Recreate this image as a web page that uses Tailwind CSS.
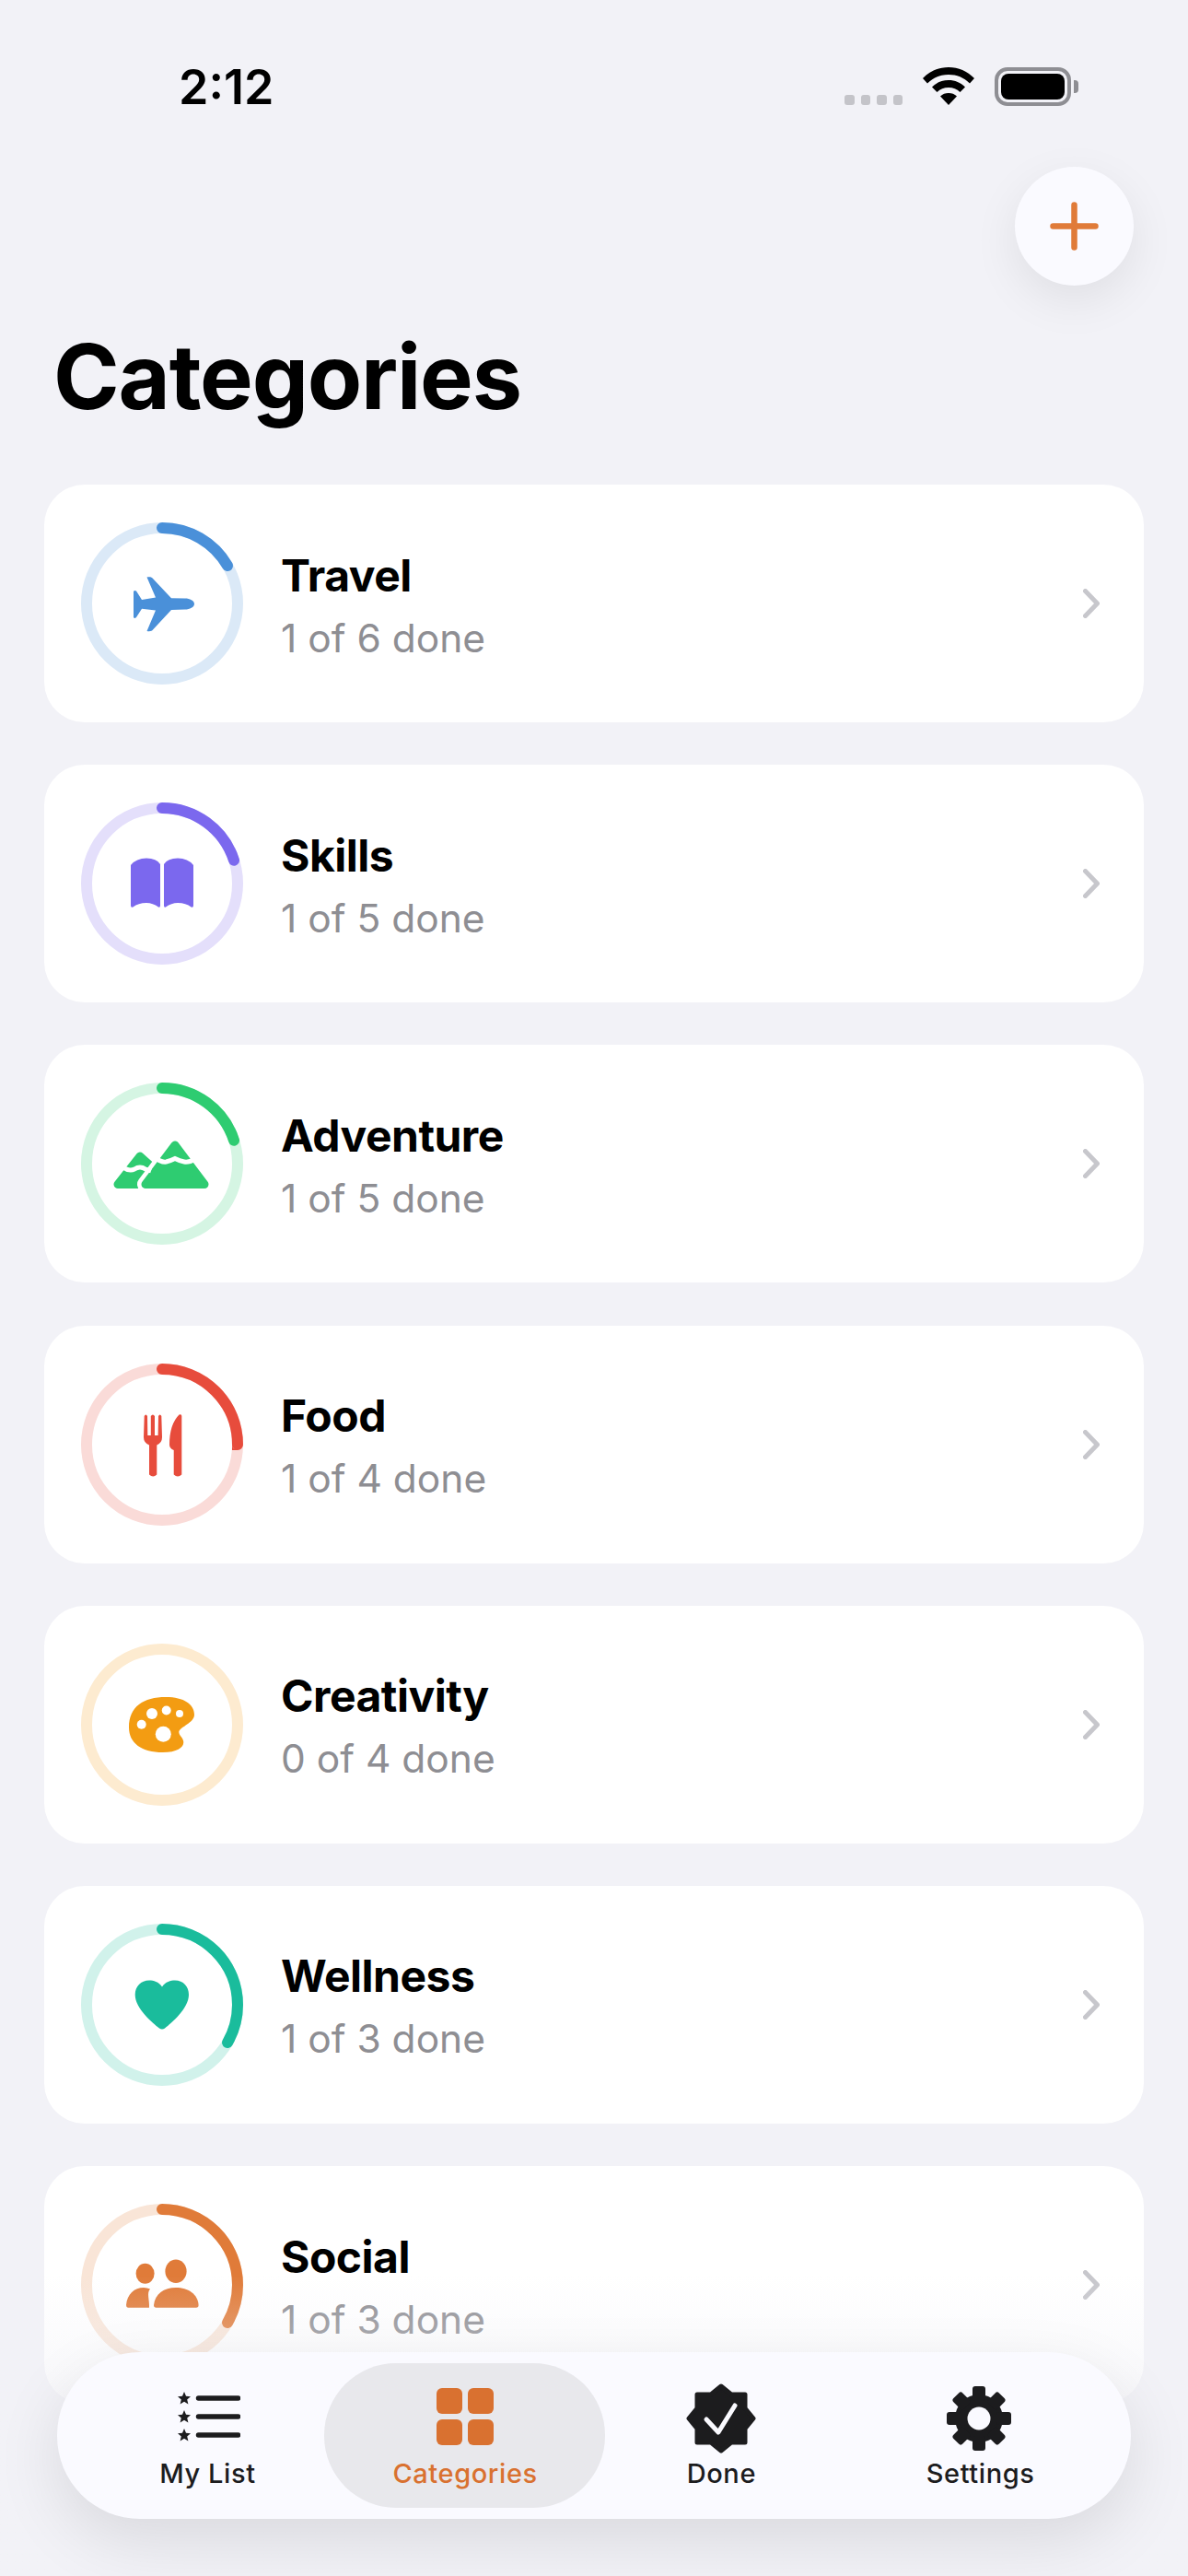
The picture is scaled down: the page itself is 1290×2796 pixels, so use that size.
<!DOCTYPE html>
<html lang="en">
<head>
    <meta charset="UTF-8">
    <meta name="viewport" content="width=device-width, initial-scale=1.0">
    <title>Categories</title>
    <script src="https://cdn.jsdelivr.net/npm/@tailwindcss/browser@4"></script>
</head>
<body class="bg-[#f2f2f7]">
<div class="relative w-[1290px] h-[2796px] overflow-hidden bg-[#f2f2f7] text-black [font-family:Inter,sans-serif]">

    <!-- status bar -->
    <div class="flex items-end justify-between h-[115px] pl-[194px] pr-[119px]">
        <span class="-mb-[5px] text-[52px] leading-[50px] font-semibold">2:12</span>
        <div class="flex items-end">
            <div class="flex gap-[7px] mb-[1px]">
                <span class="w-[10.5px] h-[11px] rounded-[3px] bg-[#c4c4c9]"></span>
                <span class="w-[10.5px] h-[11px] rounded-[3px] bg-[#c4c4c9]"></span>
                <span class="w-[10.5px] h-[11px] rounded-[3px] bg-[#c4c4c9]"></span>
                <span class="w-[10.5px] h-[11px] rounded-[3px] bg-[#c4c4c9]"></span>
            </div>
            <svg class="ml-[22px] mb-[1px]" width="56" height="41" viewBox="0 0 56 41">
                <path fill="#000" d="M28 0C17 0 8 4 0 12l5 5.5C11.5 11 19 8 28 8s16.5 3 23 9.5l5-5.5C48 4 39 0 28 0Z"/>
                <path fill="#000" d="M28 14c-7 0-13 2.5-18 7.5l5.5 5.5c3.5-3.5 7.5-5 12.5-5s9 1.5 12.5 5l5.5-5.5C41 16.5 35 14 28 14Z"/>
                <path fill="#000" d="M28 28c-3.5 0-6.5 1-9 3.5L28 41l9-9.5C34.5 29 31.5 28 28 28Z"/>
            </svg>
            <div class="ml-[22px] flex items-center">
                <div class="w-[83px] h-[42px] rounded-[14px] border-[4px] border-[#8e8e93] p-[3px]">
                    <div class="w-full h-full rounded-[8px] bg-black"></div>
                </div>
                <span class="ml-[3px] w-[5px] h-[14px] rounded-r-[4px] bg-[#8e8e93]"></span>
            </div>
        </div>
    </div>

    <!-- add button -->
    <div class="flex justify-end pr-[59px] mt-[66px]">
        <button class="flex items-center justify-center w-[129px] h-[129px] rounded-full bg-[#fafaff] shadow-[0_16px_50px_rgba(0,0,0,0.08)]">
            <svg width="53" height="53" viewBox="0 0 53 53"><path d="M26.5 3.5v46M3.5 26.5h46" stroke="#e07b39" stroke-width="6.5" stroke-linecap="round"/></svg>
        </button>
    </div>

    <h1 class="pl-[58px] mt-[39px] text-[97px] leading-[120px] font-bold tracking-[-1.2px]">Categories</h1>

    <!-- category list -->
    <div class="flex flex-col gap-[46.2px] px-[48px] mt-[57px]">

        <div class="flex items-center h-[258px] pl-[40px] pr-[48px] bg-white rounded-[44px]">
            <svg class="shrink-0" width="176" height="176" viewBox="0 0 176 176">
                <circle cx="88" cy="88" r="82" fill="none" stroke="#dbe9f7" stroke-width="12"/>
                <circle cx="88" cy="88" r="82" fill="none" stroke="#4a90d9" stroke-width="12" stroke-linecap="round" pathLength="100" stroke-dasharray="16.67 100" transform="rotate(-90 88 88)"/>
                <path fill="#4a90d9" d="M123 88.5C123 85 118 82.5 113 82.5L98 82.3L78 61C77 59.5 75 59 71.5 59.5L81 81.5L66 84L60 74.5Q58 73.5 57 75L57 103Q58 105 60 103L66 93.7L81 95.5L71.5 118C75 118.5 77 118 78 116.5L98 95L113 94.5C118 94.5 123 92 123 88.5Z"/>
            </svg>
            <div class="ml-[41px] flex-1 pt-[7px]">
                <p class="text-[48px] leading-[60px] font-bold tracking-[-0.5px]">Travel</p>
                <p class="mt-[8px] text-[42.5px] leading-[60px] text-[#8e8e93]">1 of 6 done</p>
            </div>
            <svg width="18" height="32" viewBox="0 0 18 32"><path d="M2.5 2.5L15.5 16L2.5 29.5" fill="none" stroke="#c7c7cc" stroke-width="5" stroke-linecap="round" stroke-linejoin="round"/></svg>
        </div>

        <div class="flex items-center h-[258px] pl-[40px] pr-[48px] bg-white rounded-[44px]">
            <svg class="shrink-0" width="176" height="176" viewBox="0 0 176 176">
                <circle cx="88" cy="88" r="82" fill="none" stroke="#e4dffb" stroke-width="12"/>
                <circle cx="88" cy="88" r="82" fill="none" stroke="#7b68ee" stroke-width="12" stroke-linecap="round" pathLength="100" stroke-dasharray="20 100" transform="rotate(-90 88 88)"/>
                <path fill="#7b68ee" d="M54 68Q60 60.5 71 60.5Q82 60.5 86 67L86 112Q86 114.5 84 113.5Q78 109 71 109Q62 109 56.5 113.5Q54 114.5 54 112Z"/>
                <path fill="#7b68ee" d="M122 68Q116 60.5 105 60.5Q94 60.5 90 67L90 112Q90 114.5 92 113.5Q98 109 105 109Q114 109 119.5 113.5Q122 114.5 122 112Z"/>
            </svg>
            <div class="ml-[41px] flex-1 pt-[7px]">
                <p class="text-[48px] leading-[60px] font-bold tracking-[-0.5px]">Skills</p>
                <p class="mt-[8px] text-[42.5px] leading-[60px] text-[#8e8e93]">1 of 5 done</p>
            </div>
            <svg width="18" height="32" viewBox="0 0 18 32"><path d="M2.5 2.5L15.5 16L2.5 29.5" fill="none" stroke="#c7c7cc" stroke-width="5" stroke-linecap="round" stroke-linejoin="round"/></svg>
        </div>

        <div class="flex items-center h-[258px] pl-[40px] pr-[48px] bg-white rounded-[44px]">
            <svg class="shrink-0" width="176" height="176" viewBox="0 0 176 176">
                <circle cx="88" cy="88" r="82" fill="none" stroke="#d5f5e3" stroke-width="12"/>
                <circle cx="88" cy="88" r="82" fill="none" stroke="#2ecc71" stroke-width="12" stroke-linecap="round" pathLength="100" stroke-dasharray="20 100" transform="rotate(-90 88 88)"/>
                <path fill="#2ecc71" stroke="#2ecc71" stroke-width="9" stroke-linejoin="round" d="M64 80L40 110.5L92 110.5L84 98Z"/>
                <path fill="#2ecc71" stroke="#fff" stroke-width="18" stroke-linejoin="round" d="M102 68L70 110.5L134 110.5Z"/>
                <path fill="#2ecc71" stroke="#2ecc71" stroke-width="9" stroke-linejoin="round" d="M102 68L70 110.5L134 110.5Z"/>
                <path fill="none" stroke="#fff" stroke-width="5" d="M80 81Q87 87 92.5 86Q97 85 102 82.5Q107 85 112 86Q117 87 124 83"/>
                <path fill="none" stroke="#fff" stroke-width="5" d="M44 91Q52 97 58 94Q64 90 70 94L76 96"/>
            </svg>
            <div class="ml-[41px] flex-1 pt-[7px]">
                <p class="text-[48px] leading-[60px] font-bold tracking-[-0.5px]">Adventure</p>
                <p class="mt-[8px] text-[42.5px] leading-[60px] text-[#8e8e93]">1 of 5 done</p>
            </div>
            <svg width="18" height="32" viewBox="0 0 18 32"><path d="M2.5 2.5L15.5 16L2.5 29.5" fill="none" stroke="#c7c7cc" stroke-width="5" stroke-linecap="round" stroke-linejoin="round"/></svg>
        </div>

        <div class="flex items-center h-[258px] pl-[40px] pr-[48px] bg-white rounded-[44px]">
            <svg class="shrink-0" width="176" height="176" viewBox="0 0 176 176">
                <circle cx="88" cy="88" r="82" fill="none" stroke="#fadbd8" stroke-width="12"/>
                <circle cx="88" cy="88" r="82" fill="none" stroke="#e74c3c" stroke-width="12" stroke-linecap="round" pathLength="100" stroke-dasharray="25 100" transform="rotate(-90 88 88)"/>
                <path fill="#e74c3c" d="M68.7 57Q70.3 54 72 57L72.3 78H75.8V57Q78 54 80 57V78H83.6L84 57Q85.7 54 87.3 57L88 80Q88 86 82.3 88.5V120.5Q78.2 124.5 74 120.5V88.5Q68 86 68 80Z"/>
                <path fill="#e74c3c" d="M109.3 57V120.5Q105 124.5 100.7 120.5V94Q96 92 96 88Q96 66 106.5 55.5Q109.3 54.5 109.3 57Z"/>
            </svg>
            <div class="ml-[41px] flex-1 pt-[7px]">
                <p class="text-[48px] leading-[60px] font-bold tracking-[-0.5px]">Food</p>
                <p class="mt-[8px] text-[42.5px] leading-[60px] text-[#8e8e93]">1 of 4 done</p>
            </div>
            <svg width="18" height="32" viewBox="0 0 18 32"><path d="M2.5 2.5L15.5 16L2.5 29.5" fill="none" stroke="#c7c7cc" stroke-width="5" stroke-linecap="round" stroke-linejoin="round"/></svg>
        </div>

        <div class="flex items-center h-[258px] pl-[40px] pr-[48px] bg-white rounded-[44px]">
            <svg class="shrink-0" width="176" height="176" viewBox="0 0 176 176">
                <circle cx="88" cy="88" r="82" fill="none" stroke="#fdebd0" stroke-width="12"/>
                <path fill="#f39c12" d="M52 91C52 68 68 58 92 58C112 58 123 66 123 77C123 86 108 90 106.3 95.6C106 100 111.3 102 111.3 107C111.3 113 104 118 88.7 118C66 118 52 108 52 91Z"/>
                <circle cx="77" cy="76" r="6" fill="#fff"/>
                <circle cx="92.7" cy="72.5" r="5" fill="#fff"/>
                <circle cx="107" cy="76" r="4" fill="#fff"/>
                <circle cx="65.7" cy="87.7" r="5" fill="#fff"/>
                <circle cx="89.3" cy="98.3" r="8.5" fill="#fff"/>
            </svg>
            <div class="ml-[41px] flex-1 pt-[7px]">
                <p class="text-[48px] leading-[60px] font-bold tracking-[-0.5px]">Creativity</p>
                <p class="mt-[8px] text-[42.5px] leading-[60px] text-[#8e8e93]">0 of 4 done</p>
            </div>
            <svg width="18" height="32" viewBox="0 0 18 32"><path d="M2.5 2.5L15.5 16L2.5 29.5" fill="none" stroke="#c7c7cc" stroke-width="5" stroke-linecap="round" stroke-linejoin="round"/></svg>
        </div>

        <div class="flex items-center h-[258px] pl-[40px] pr-[48px] bg-white rounded-[44px]">
            <svg class="shrink-0" width="176" height="176" viewBox="0 0 176 176">
                <circle cx="88" cy="88" r="82" fill="none" stroke="#d1f2eb" stroke-width="12"/>
                <circle cx="88" cy="88" r="82" fill="none" stroke="#1abc9c" stroke-width="12" stroke-linecap="round" pathLength="100" stroke-dasharray="33.33 100" transform="rotate(-90 88 88)"/>
                <path fill="#1abc9c" d="M88 68.5C84 63 79 61.5 74 61.5C65 61.5 58.7 68 58.7 77C58.7 92 78 108 85 113.5Q88 115.5 91 113.5C98 108 117 92 117 77C117 68 111 61.5 102 61.5C97 61.5 92 63 88 68.5Z"/>
            </svg>
            <div class="ml-[41px] flex-1 pt-[7px]">
                <p class="text-[48px] leading-[60px] font-bold tracking-[-0.5px]">Wellness</p>
                <p class="mt-[8px] text-[42.5px] leading-[60px] text-[#8e8e93]">1 of 3 done</p>
            </div>
            <svg width="18" height="32" viewBox="0 0 18 32"><path d="M2.5 2.5L15.5 16L2.5 29.5" fill="none" stroke="#c7c7cc" stroke-width="5" stroke-linecap="round" stroke-linejoin="round"/></svg>
        </div>

        <div class="flex items-center h-[258px] pl-[40px] pr-[48px] bg-white rounded-[44px]">
            <svg class="shrink-0" width="176" height="176" viewBox="0 0 176 176">
                <circle cx="88" cy="88" r="82" fill="none" stroke="#f9e5d7" stroke-width="12"/>
                <circle cx="88" cy="88" r="82" fill="none" stroke="#e07b39" stroke-width="12" stroke-linecap="round" pathLength="100" stroke-dasharray="33.33 100" transform="rotate(-90 88 88)"/>
                <ellipse cx="69.6" cy="75.7" rx="10" ry="11" fill="#e07b39"/>
                <ellipse cx="103" cy="73.3" rx="11.6" ry="12.7" fill="#e07b39"/>
                <path fill="#e07b39" d="M49 110C50 98 58 91 68 91Q72 91 75 92.5C71 97 74.5 104 74 112.7L51 112.7Q49 112.7 49 110Z"/>
                <path fill="#e07b39" d="M79 110C80 98 90 91 103 91C116 91 127 98 127.6 110Q127.6 112.7 125 112.7L81.5 112.7Q79 112.7 79 110Z"/>
            </svg>
            <div class="ml-[41px] flex-1 pt-[7px]">
                <p class="text-[48px] leading-[60px] font-bold tracking-[-0.5px]">Social</p>
                <p class="mt-[8px] text-[42.5px] leading-[60px] text-[#8e8e93]">1 of 3 done</p>
            </div>
            <svg width="18" height="32" viewBox="0 0 18 32"><path d="M2.5 2.5L15.5 16L2.5 29.5" fill="none" stroke="#c7c7cc" stroke-width="5" stroke-linecap="round" stroke-linejoin="round"/></svg>
        </div>
    </div>

    <!-- fade behind the tab bar -->
    <div class="absolute left-0 right-0 bottom-0 h-[326px] bg-gradient-to-b from-[#f2f2f7]/0 via-[#f2f2f7]/40 via-30% to-[#f2f2f7] to-60%"></div>

    <!-- tab bar -->
    <div class="absolute left-[62px] top-[2553px] w-[1166px] h-[181px] px-[23.5px] grid grid-cols-4 rounded-[90px] bg-[#fafaff] shadow-[0_24px_70px_rgba(0,0,0,0.1)]">
        <div class="flex flex-col items-center pt-[40px]">
            <svg class="ml-[4px]" width="68" height="60" viewBox="0 0 68 60">
                <path fill="#1c1c1e" d="M7 3l2 4.8 5 .4-3.8 3.3 1.2 5L7 13.8 2.6 16.5l1.2-5L0 8.2l5-.4Z"/>
                <path fill="#1c1c1e" d="M7 23l2 4.8 5 .4-3.8 3.3 1.2 5L7 33.8 2.6 36.5l1.2-5L0 28.2l5-.4Z"/>
                <path fill="#1c1c1e" d="M7 43l2 4.8 5 .4-3.8 3.3 1.2 5L7 53.8 2.6 56.5l1.2-5L0 48.2l5-.4Z"/>
                <path d="M22.5 10h43M22.5 30h43M22.5 50h43" stroke="#1c1c1e" stroke-width="5.5" stroke-linecap="round"/>
            </svg>
            <span class="mt-[13.5px] text-[29px] leading-[36px] font-medium tracking-[0.6px] text-[#1c1c1e]">My List</span>
        </div>
        <div class="relative flex flex-col items-center pt-[39px]">
            <div class="absolute -left-[13px] -right-[12px] top-[12px] h-[157px] rounded-[78px] bg-[#e8e8ec]"></div>
            <div class="relative grid grid-cols-2 gap-[5.5px] w-[61.5px]">
                <span class="h-[28px] rounded-[6px] bg-[#d97130]"></span>
                <span class="h-[28px] rounded-[6px] bg-[#d97130]"></span>
                <span class="h-[28px] rounded-[6px] bg-[#d97130]"></span>
                <span class="h-[28px] rounded-[6px] bg-[#d97130]"></span>
            </div>
            <span class="relative mt-[13px] text-[29px] leading-[36px] font-medium tracking-[0.6px] text-[#d97130]">Categories</span>
        </div>
        <div class="flex flex-col items-center pt-[33px] pr-[3px]">
            <svg width="78" height="78" viewBox="-39 -39 78 78">
                <path fill="#1c1c1e" stroke="#1c1c1e" stroke-width="5" stroke-linejoin="round" d="M0-35L11-26H26V-11L35 0 26 11V26H11L0 35-11 26H-26V11L-35 0-26-11V-26H-11Z"/>
                <path fill="none" stroke="#fafaff" stroke-width="5" stroke-linecap="round" stroke-linejoin="round" d="M-16 1L-3 15 15-14"/>
            </svg>
            <span class="mt-[3px] text-[29px] leading-[36px] font-medium tracking-[0.6px] text-[#1c1c1e]">Done</span>
        </div>
        <div class="flex flex-col items-center pt-[36px]">
            <svg class="-ml-[4px]" width="72" height="72" viewBox="-36 -36 72 72">
                <g fill="#1c1c1e">
                    <circle r="26"/>
                    <rect x="-7" y="-35" width="14" height="16" rx="3"/>
                    <rect x="-7" y="-35" width="14" height="16" rx="3" transform="rotate(45)"/>
                    <rect x="-7" y="-35" width="14" height="16" rx="3" transform="rotate(90)"/>
                    <rect x="-7" y="-35" width="14" height="16" rx="3" transform="rotate(135)"/>
                    <rect x="-7" y="-35" width="14" height="16" rx="3" transform="rotate(180)"/>
                    <rect x="-7" y="-35" width="14" height="16" rx="3" transform="rotate(225)"/>
                    <rect x="-7" y="-35" width="14" height="16" rx="3" transform="rotate(270)"/>
                    <rect x="-7" y="-35" width="14" height="16" rx="3" transform="rotate(315)"/>
                </g>
                <circle r="12.5" fill="#fafaff"/>
            </svg>
            <span class="mt-[6px] text-[29px] leading-[36px] font-medium tracking-[0.6px] text-[#1c1c1e]">Settings</span>
        </div>
    </div>
</div>
</body>
</html>
